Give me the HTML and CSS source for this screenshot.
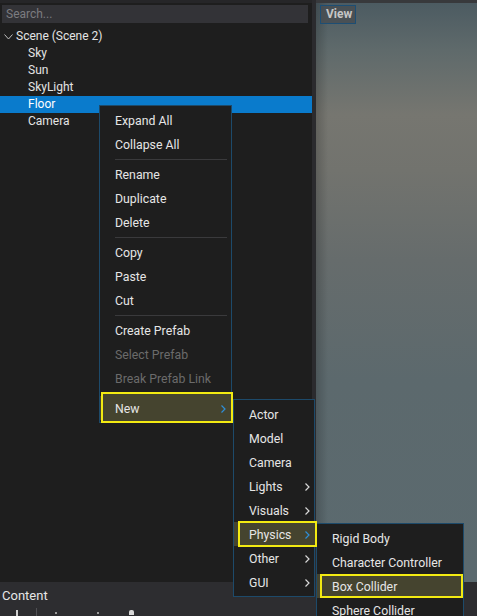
FILE: index.html
```html
<!DOCTYPE html>
<html>
<head>
<meta charset="utf-8">
<link rel="stylesheet" href="styles.css">
</head>
<body>
<div class="app">
  <div class="left">
    <div class="topstrip"></div>
    <div class="search">Search...</div>
    <div class="tree">
      <div class="row root">
        <svg class="caret" width="9" height="6" viewBox="0 0 9 6"><path d="M0.5 0.5 L4.5 5 L8.5 0.5" fill="none" stroke="#bdbdbd" stroke-width="1"/></svg>
        <span>Scene (Scene 2)</span>
      </div>
      <div class="row child">Sky</div>
      <div class="row child">Sun</div>
      <div class="row child">SkyLight</div>
      <div class="row child selected">Floor</div>
      <div class="row child">Camera</div>
    </div>
  </div>
  <div class="splitter"></div>
  <div class="viewport">
    <div class="vtop"></div>
    <div class="viewbtn">View</div>
  </div>
  <div class="content">
    <div class="content-title">Content</div>
    <div class="toolbar">
      <span class="tb-plus"></span>
      <span class="tb-sep"></span>
      <span class="tb-dot d1"></span>
      <span class="tb-dot d2"></span>
      <span class="tb-home"></span>
    </div>
  </div>
</div>

<div class="menu menu-main">
  <div class="item">Expand All</div>
  <div class="item">Collapse All</div>
  <div class="sep"></div>
  <div class="item">Rename</div>
  <div class="item">Duplicate</div>
  <div class="item">Delete</div>
  <div class="sep"></div>
  <div class="item">Copy</div>
  <div class="item">Paste</div>
  <div class="item">Cut</div>
  <div class="sep"></div>
  <div class="item">Create Prefab</div>
  <div class="item disabled">Select Prefab</div>
  <div class="item disabled">Break Prefab Link</div>
  <div class="sep"></div>
  <div class="item sub active hl-new">New<svg class="chev" width="5" height="8" viewBox="0 0 5 8"><path d="M0.5 0.5 L4 4 L0.5 7.5" fill="none" stroke="#2f8fd8" stroke-width="1.2"/></svg></div>
</div>

<div class="menu menu-new">
  <div class="item">Actor</div>
  <div class="item">Model</div>
  <div class="item">Camera</div>
  <div class="item sub">Lights<svg class="chev" width="5" height="8" viewBox="0 0 5 8"><path d="M0.5 0.5 L4 4 L0.5 7.5" fill="none" stroke="#d8d8d8" stroke-width="1.2"/></svg></div>
  <div class="item sub">Visuals<svg class="chev" width="5" height="8" viewBox="0 0 5 8"><path d="M0.5 0.5 L4 4 L0.5 7.5" fill="none" stroke="#d8d8d8" stroke-width="1.2"/></svg></div>
  <div class="item sub active hl-physics">Physics<svg class="chev" width="5" height="8" viewBox="0 0 5 8"><path d="M0.5 0.5 L4 4 L0.5 7.5" fill="none" stroke="#2f8fd8" stroke-width="1.2"/></svg></div>
  <div class="item sub">Other<svg class="chev" width="5" height="8" viewBox="0 0 5 8"><path d="M0.5 0.5 L4 4 L0.5 7.5" fill="none" stroke="#d8d8d8" stroke-width="1.2"/></svg></div>
  <div class="item sub">GUI<svg class="chev" width="5" height="8" viewBox="0 0 5 8"><path d="M0.5 0.5 L4 4 L0.5 7.5" fill="none" stroke="#d8d8d8" stroke-width="1.2"/></svg></div>
</div>

<div class="menu menu-physics">
  <div class="item">Rigid Body</div>
  <div class="item">Character Controller</div>
  <div class="item active hl-box">Box Collider</div>
  <div class="item">Sphere Collider</div>
</div>
</body>
</html>
```

FILE: styles.css
```css
* { box-sizing: border-box; }

html, body {
  margin: 0;
  padding: 0;
  width: 477px;
  height: 616px;
  overflow: hidden;
  background: #1e1e1e;
  font-family: Roboto, "Noto Sans", sans-serif;
  font-size: 12px;
  color: #e4e4e4;
}

body { position: relative; }

.app {
  display: grid;
  grid-template-columns: 312px 4px 1fr;
  grid-template-rows: 582px 34px;
  width: 477px;
  height: 616px;
}

.left {
  background: #1e1e1e;
  display: flex;
  flex-direction: column;
}

.topstrip {
  height: 3px;
  background: #262628;
}

.search {
  margin: 2px 4px 0 2px;
  height: 18px;
  background: #333337;
  color: #7c7c80;
  padding-left: 4px;
  line-height: 18px;
  font-size: 12px;
}

.tree {
  padding-top: 5px;
}

.row {
  height: 17px;
  line-height: 17px;
  white-space: nowrap;
}

.root {
  display: flex;
  align-items: center;
  padding-left: 4px;
}

.caret {
  margin-right: 3px;
  margin-top: 1px;
}

.child {
  padding-left: 28px;
}

.selected {
  background: #0a7bcc;
  color: #ffffff;
}

.splitter {
  background: #2b2b2e;
}

.viewport {
  position: relative;
  background:
    linear-gradient(90deg, rgba(0,0,0,0.18) 0px, rgba(0,0,0,0) 12px),
    linear-gradient(180deg, #4b5a61 0px, #5f6a6b 50px, #767670 115px, #72736e 170px, #666c6c 260px, #5c696d 380px, #5b6a6f 582px);
}

.vtop {
  height: 3px;
  background: #38393c;
}

.viewbtn {
  position: absolute;
  left: 4px;
  top: 5px;
  width: 36px;
  height: 19px;
  border: 1px solid #1d4e74;
  background: rgba(72, 78, 82, 0.85);
  color: #c6c6c6;
  font-weight: bold;
  font-size: 12px;
  line-height: 17px;
  padding-left: 5px;
}

.content {
  grid-column: 1 / 4;
  background: #2d2d30;
  position: relative;
}

.content-title {
  padding: 6px 0 0 2px;
  font-size: 13px;
  line-height: 16px;
  color: #e6e6e6;
}

.toolbar {
  position: relative;
  height: 12px;
}

.toolbar span { position: absolute; }

.tb-plus {
  left: 16px;
  top: 6px;
  width: 2px;
  height: 8px;
  background: #d0d0d0;
}

.tb-sep {
  left: 36px;
  top: 4px;
  width: 1px;
  height: 10px;
  background: #505054;
}

.tb-dot {
  top: 8px;
  width: 2px;
  height: 2px;
  background: #9a9a9a;
}
.d1 { left: 55px; }
.d2 { left: 97px; }

.tb-home {
  left: 129px;
  top: 6px;
  width: 5px;
  height: 5px;
  border-radius: 2px 2px 0 0;
  background: #d8d8d8;
}

/* Context menus */
.menu {
  position: absolute;
  background: #1e1e1e;
  border: 1px solid #1d4a6a;
  padding: 2px 0;
}

.menu-main {
  left: 99px;
  top: 105px;
  width: 133px;
}

.menu-new {
  left: 233px;
  top: 399px;
  width: 82px;
}

.menu-physics {
  left: 316px;
  top: 523px;
  width: 148px;
}

.item {
  position: relative;
  height: 24px;
  line-height: 26px;
  padding-left: 15px;
  white-space: nowrap;
  color: #e6e6e6;
  font-size: 12.3px;
}

.item.disabled { color: #6b6b6b; }

.sub .chev {
  position: absolute;
  right: 5px;
  top: 9px;
}

.menu-new .sub .chev { right: 4px; }

.sep {
  height: 6px;
  position: relative;
}

.sep::after {
  content: "";
  position: absolute;
  left: 15px;
  right: 4px;
  top: 3px;
  height: 1px;
  background: #3a3a3c;
}

.active {
  background: #45442f;
  z-index: 1;
  isolation: isolate;
}

.active::before {
  content: "";
  position: absolute;
  border: 2px solid #f2ea12;
  background: #45442f;
  z-index: -1;
}

.hl-new::before {
  top: -4px;
  bottom: -3px;
  left: 1px;
  right: -2px;
}

.hl-physics::before {
  top: -1px;
  bottom: -1px;
  left: 4px;
  right: -3px;
}

.hl-box::before {
  top: 0;
  bottom: 0;
  left: 3px;
  right: 0;
}
```
